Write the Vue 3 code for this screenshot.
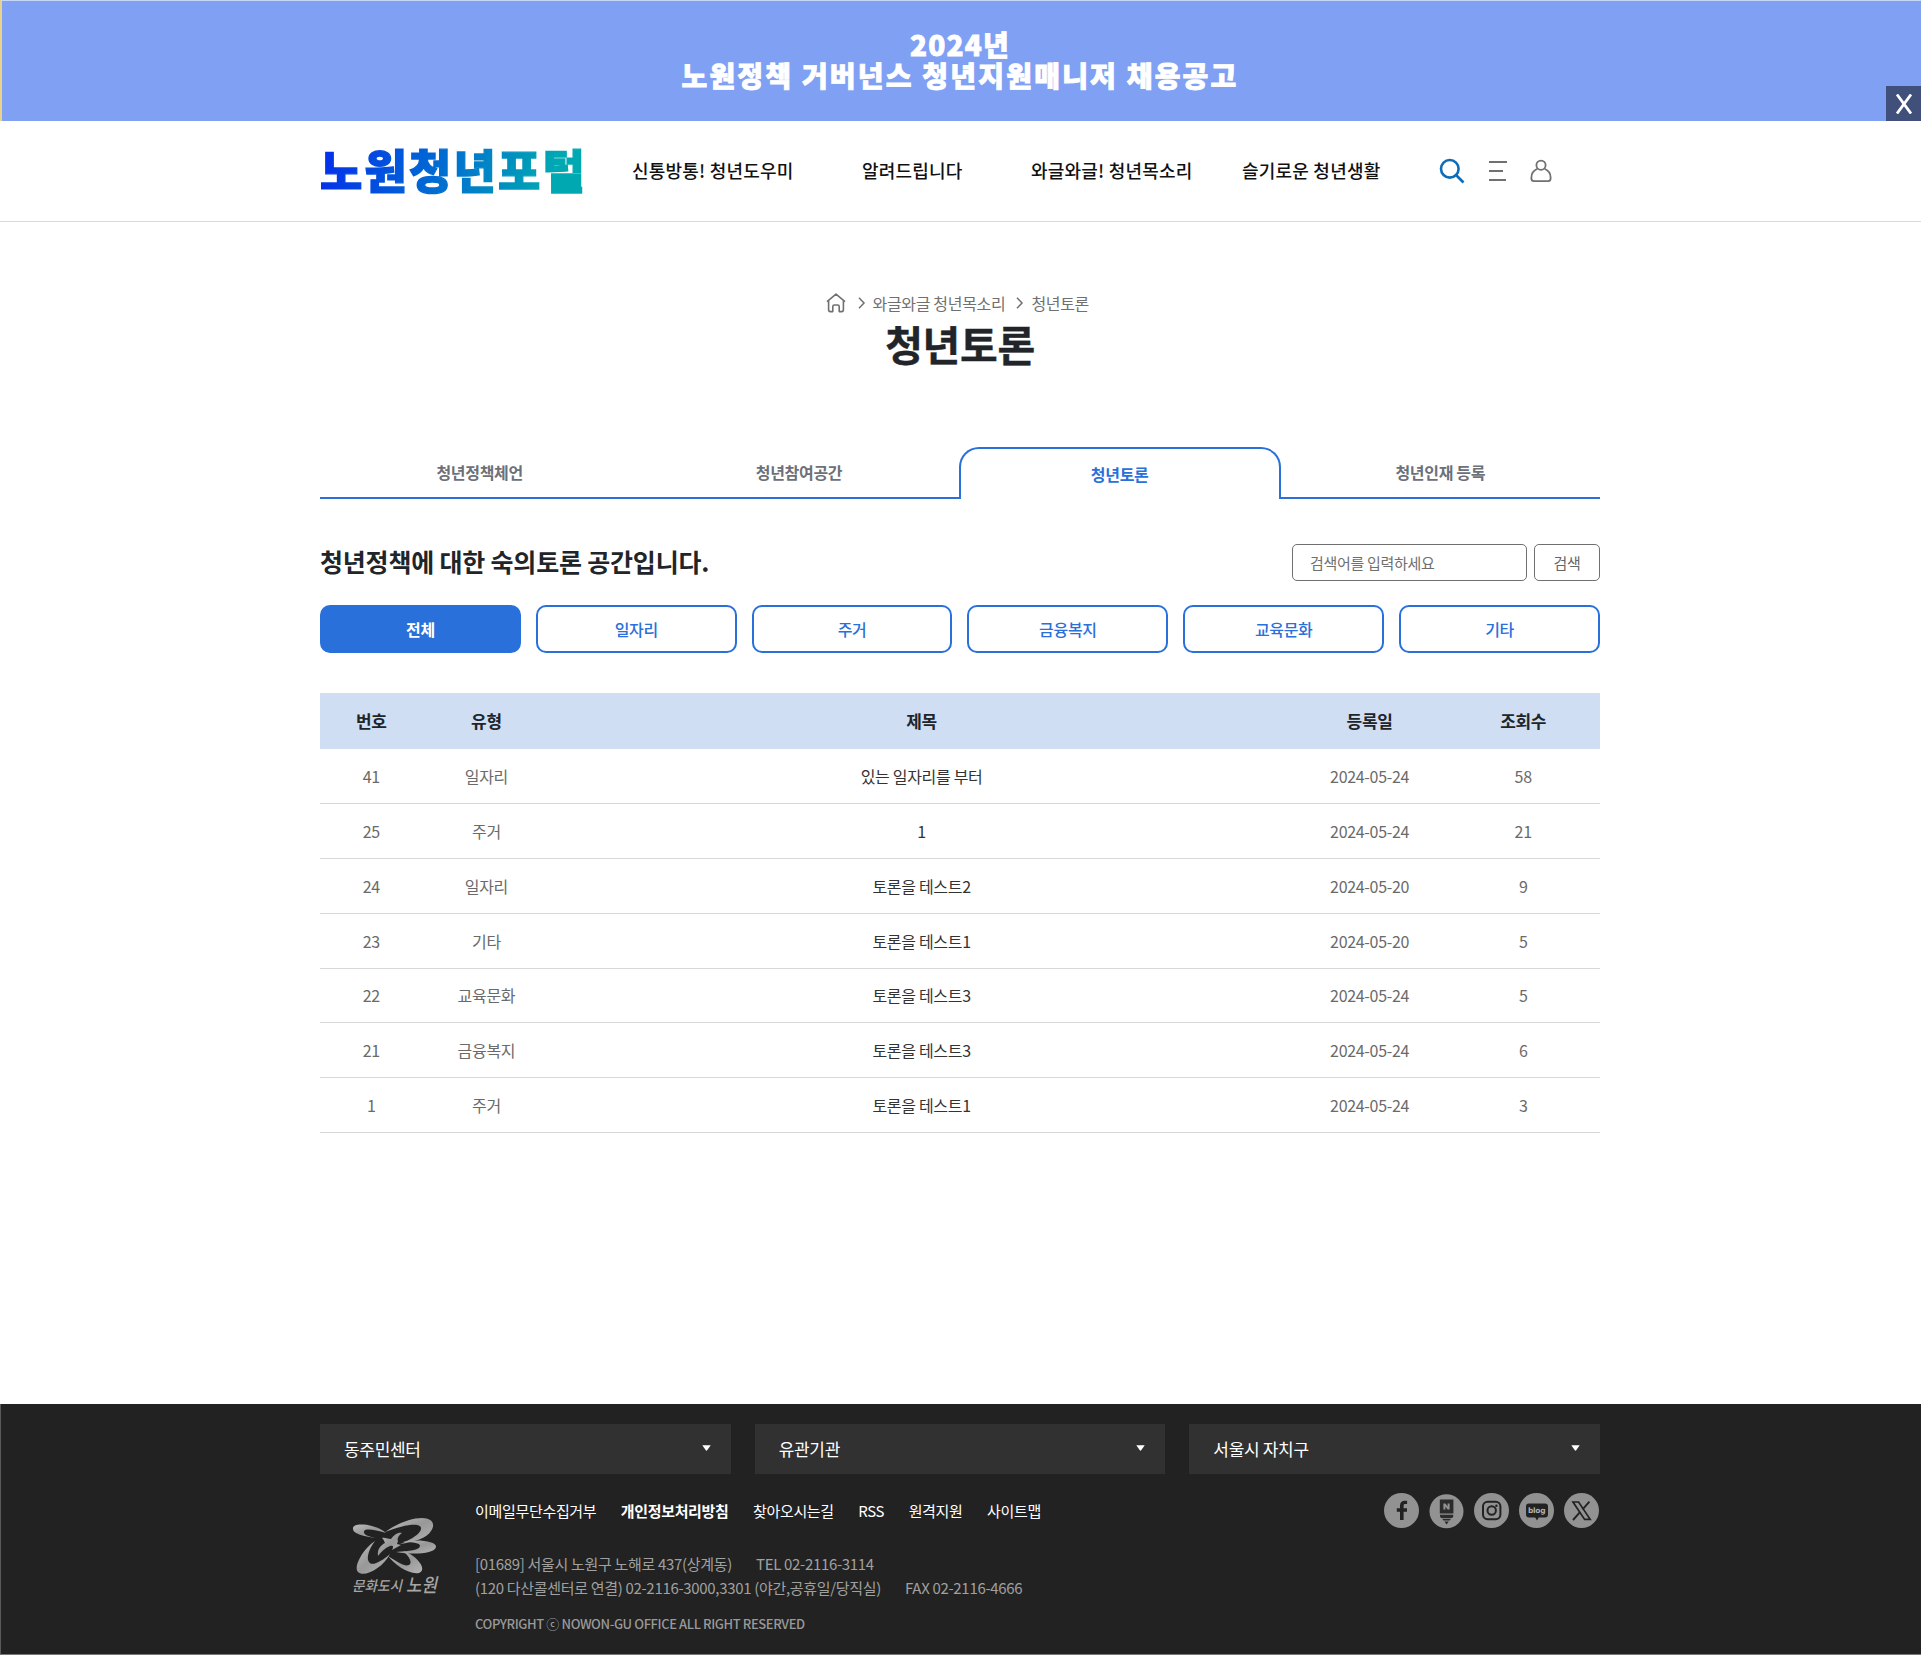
<script setup>
const nav = ['신통방통! 청년도우미', '알려드립니다', '와글와글! 청년목소리', '슬기로운 청년생활']
const tabs = ['청년정책체언', '청년참여공간', '청년토론', '청년인재 등록']
const categories = ['전체', '일자리', '주거', '금융복지', '교육문화', '기타']
const columns = ['번호', '유형', '제목', '등록일', '조회수']
const rows = [
  [41, '일자리', '있는 일자리를 부터', '2024-05-24', 58],
  [25, '주거', '1', '2024-05-24', 21],
  [24, '일자리', '토론을 테스트2', '2024-05-20', 9],
  [23, '기타', '토론을 테스트1', '2024-05-20', 5],
  [22, '교육문화', '토론을 테스트3', '2024-05-24', 5],
  [21, '금융복지', '토론을 테스트3', '2024-05-24', 6],
  [1, '주거', '토론을 테스트1', '2024-05-24', 3],
]
const sites = ['동주민센터', '유관기관', '서울시 자치구']
const links = ['이메일무단수집거부', '개인정보처리방침', '찾아오시는길', 'RSS', '원격지원', '사이트맵']
</script>

<template>
  <div class="page">
    <div class="banner">
      <p class="year">2024년</p>
      <p class="notice">노원정책 거버넌스 청년지원매니저 채용공고</p>
      <button class="close" aria-label="닫기">
        <svg width="18" height="20" viewBox="0 0 18 20"><path d="M2 0.5 16 19.5M16 0.5 2 19.5" stroke="#fff" stroke-width="2.8" /></svg>
      </button>
    </div>

    <header class="header">
      <div class="wrap header-in">
        <a class="logo">노원청년포털</a>
        <nav class="nav"><a v-for="n in nav" :key="n">{{ n }}</a></nav>
        <div class="tools">
          <svg class="i-search" width="26" height="26" viewBox="0 0 26 26" fill="none" stroke="#0d6db8" stroke-width="2.6"><circle cx="10.8" cy="10.8" r="8.8" /><path d="M17 17l7.5 7.5" /></svg>
          <svg class="i-menu" width="18" height="22" viewBox="0 0 18 22" stroke="#707070" stroke-width="2"><path d="M0 2h18M0 11h14M0 20h17" /></svg>
          <svg class="i-user" width="22" height="24" viewBox="0 0 22 24" fill="none" stroke="#707070" stroke-width="1.8"><circle cx="11" cy="6.2" r="4.6" /><path d="M7.4 9.8C3.6 11.5 1.4 14.6 1.4 18.4v1.2a2.6 2.6 0 0 0 2.6 2.6h14a2.6 2.6 0 0 0 2.6-2.6v-1.2c0-3.8-2.2-6.9-6-8.6" /></svg>
        </div>
      </div>
    </header>

    <main class="wrap main">
      <div class="crumbs">
        <svg width="20" height="20" viewBox="0 0 20 20" fill="none" stroke="#707070" stroke-width="1.6" stroke-linejoin="round"><path d="M1 8.6 10 1.2l9 7.4M2.6 7.6v9.2a1.8 1.8 0 0 0 1.8 1.8h2.4v-5a1.6 1.6 0 0 1 1.6-1.6h3.2a1.6 1.6 0 0 1 1.6 1.6v5h2.4a1.8 1.8 0 0 0 1.8-1.8V7.6" /></svg>
        <svg class="chev first" width="8" height="12" viewBox="0 0 8 12"><path d="M1 .8 6 6l-5 5.2" fill="none" stroke="#707070" stroke-width="1.5" /></svg>
        <span>와글와글 청년목소리</span>
        <svg class="chev" width="8" height="12" viewBox="0 0 8 12"><path d="M1 .8 6 6l-5 5.2" fill="none" stroke="#707070" stroke-width="1.5" /></svg>
        <span>청년토론</span>
      </div>
      <h1>청년토론</h1>

      <div class="tabs">
        <a v-for="(t, i) in tabs" :key="t" :class="{ on: i === 2 }">{{ t }}</a>
      </div>

      <div class="intro">
        <h2>청년정책에 대한 숙의토론 공간입니다.</h2>
        <div class="search">
          <input type="text" placeholder="검색어를 입력하세요" />
          <button>검색</button>
        </div>
      </div>

      <div class="cats">
        <a v-for="(c, i) in categories" :key="c" :class="{ on: i === 0 }">{{ c }}</a>
      </div>

      <div class="table">
        <div class="row head"><span v-for="c in columns" :key="c">{{ c }}</span></div>
        <div v-for="r in rows" :key="r[0]" class="row">
          <span v-for="(c, i) in r" :key="i">{{ c }}</span>
        </div>
      </div>
    </main>

    <footer class="footer">
      <div class="wrap">
        <div class="sites">
          <div v-for="s in sites" :key="s" class="site">
            <span>{{ s }}</span>
            <svg width="9" height="6" viewBox="0 0 9 6"><path d="M.3.3h8.4L5.2 5.2a.9.9 0 0 1-1.4 0z" fill="#fff" /></svg>
          </div>
        </div>
        <div class="foot">
          <div class="emblem">
            <svg width="90" height="80" viewBox="0 0 90 80">
              <defs>
                <linearGradient id="silver" x1="0" y1="0" x2="1" y2="1"><stop offset="0" stop-color="#bcbcbc" /><stop offset=".5" stop-color="#989898" /><stop offset="1" stop-color="#b4b4b4" /></linearGradient>
              </defs>
              <g fill="url(#silver)">
                <path d="M35 14C45 7 60 0 72 0c10 0 14 6 9 13C77 20 64 24 50 26c12-5 20-10 21-15C72 4 55 6 35 14z" />
                <path d="M25 20C14 18 2 16 3 10 4 4 26 6 36 15 24 11 13 10 14 14c0 3 4 4 11 6z" />
                <path d="M53 24c13-3 34-1 33 5-1 7-24 8-40 5 13-1 24-2 24-6 0-3-6-4-17-4z" />
                <path d="M25 23C14 30 3 48 8 54c6 6 25-4 32-18-8 7-18 13-21 8-3-4 0-13 6-21z" />
                <path d="M38 38c6 8 21 19 31 17 9-3-2-18-16-22 6 5 10 12 6 14-5 2-13-4-21-9z" />
                <path d="M32 20c3-1 6 1 9 1 3-4 7-7 11-6-4 3-5 6-4 8l-1 3 4 1-9 5c2-4 1-5-2-4-5 2-9 6-12 10-1-7 3-11 7-13-1-2-1-3-3-5z" />
              </g>
              <text class="brush" x="2" y="73" textLength="50" lengthAdjust="spacingAndGlyphs" font-size="14">문화도시</text>
              <text class="brush" x="56" y="74" textLength="31" lengthAdjust="spacingAndGlyphs" font-size="19">노원</text>
            </svg>
          </div>
          <div class="info">
            <div class="links"><a v-for="(l, i) in links" :key="l" :class="{ strong: i === 1 }">{{ l }}</a></div>
            <address>
              <p><span>[01689] 서울시 노원구 노해로 437(상계동)</span><span>TEL 02-2116-3114</span></p>
              <p><span>(120 다산콜센터로 연결) 02-2116-3000,3301 (야간,공휴일/당직실)</span><span>FAX 02-2116-4666</span></p>
            </address>
            <p class="copy">COPYRIGHT ⓒ NOWON-GU OFFICE ALL RIGHT RESERVED</p>
          </div>
          <div class="social">
            <svg viewBox="0 0 35 35"><circle cx="17.5" cy="17.5" r="17.5" fill="#929292" /><path d="M16 27V18.8h-3.2v-3.6H16v-2.7c0-3.3 1.9-4.8 4.7-4.8h2.4v3.4h-1.7c-1.4 0-1.8.6-1.8 1.8v2.3h3.4v3.6h-3.4V27z" fill="#222" /></svg>
            <svg viewBox="0 0 35 35"><circle cx="17.5" cy="18.2" r="17" fill="#929292" /><path d="M10.8 6.5h13.6v14H10.8zM11 21.8h13.2v1.6l-1 1.6H12l-1-1.6zM13.2 25.8h8.8l-1.3 1.8h-6.2zM15.4 28.4h4.4l-2.2 3.2z" fill="#2c2c2c" /><path d="M14.4 16.6v-6.2h2l2.2 3v-3h2v6.2h-2l-2.2-3v3z" fill="#929292" /></svg>
            <svg viewBox="0 0 35 35"><circle cx="17.5" cy="17.5" r="17.5" fill="#929292" /><g fill="none" stroke="#222" stroke-width="2"><rect x="9" y="8.8" width="17.4" height="17.4" rx="4.6" /><circle cx="17.7" cy="17.5" r="4.2" /></g><circle cx="22.4" cy="12.8" r="1.2" fill="#222" /></svg>
            <svg viewBox="0 0 35 35"><circle cx="17.5" cy="17.5" r="17.5" fill="#929292" /><path d="M10 10.5h16a3 3 0 0 1 3 3v8a3 3 0 0 1-3 3h-6.2l-1.8 3-1.8-3H10a3 3 0 0 1-3-3v-8a3 3 0 0 1 3-3z" fill="#222" /><text x="9" y="20" class="blog" textLength="17.6">blog</text></svg>
            <svg viewBox="0 0 35 35"><circle cx="17.5" cy="17.5" r="17.5" fill="#929292" /><path d="M9 9h5.6l11.6 17.4h-5.6z" fill="none" stroke="#222" stroke-width="1.7" /><path d="M25.4 8.6 18.6 16.4M16 19.2 9 27" stroke="#222" stroke-width="1.9" /></svg>
          </div>
        </div>
      </div>
    </footer>
  </div>
</template>

<style>
body { margin: 0; background: #fff; }
</style>

<style scoped>
* { box-sizing: border-box; }
p, h1, h2 { margin: 0; }
.page { height: 1656px; overflow: hidden; font-family: "Noto Sans CJK KR", "Noto Sans", sans-serif; font-size: 16px; letter-spacing: -0.02em; color: #212529; }
.wrap { width: 1280px; margin-left: 320px; }

.banner { position: relative; height: 121px; padding: 28px 3px 0 0; background: #80a0f3; border-top: 1px solid #c5d6f6; border-left: 2px solid #e8d28c; color: #fff; text-align: center; font-weight: 900; font-size: 28px; line-height: 31px; -webkit-text-stroke: 0.8px #fff; }
.year { letter-spacing: 1.2px; }
.notice { letter-spacing: 2.2px; }
.close { position: absolute; right: 0; bottom: 0; width: 35px; height: 35px; padding: 0; border: 0; background: #40507a; display: flex; align-items: center; justify-content: center; }

.header { height: 101px; border-bottom: 1px solid #d9d9d9; }
.header-in { height: 100px; display: flex; align-items: center; }
.logo { width: 293px; margin-top: -6px; font-size: 46px; line-height: 60px; font-weight: 900; letter-spacing: 2.2px; -webkit-text-stroke: 1.3px transparent; }
.logo { background: linear-gradient(105deg, #0433ea 5%, #0068d4 42%, #00a9b2 86%) 0 0 / 268px 100% no-repeat; -webkit-background-clip: text; background-clip: text; color: transparent; }
.nav { display: flex; margin-top: -3px; }
.nav a { width: 199.5px; text-align: center; font-size: 18px; font-weight: 500; color: #111; letter-spacing: 0.2px; white-space: nowrap; }
.tools { display: flex; align-items: center; margin-left: 28px; }
.i-menu { margin-left: 24px; }
.i-user { margin-left: 23px; }

.main { height: 1182px; padding-top: 69px; }
.crumbs { height: 24px; display: flex; align-items: center; padding-left: 505.5px; color: #707070; line-height: 24px; }
.chev { margin: 0 7px 0 11px; }
.chev.first { margin: 0 7px 0 12px; }
h1 { height: 60px; margin-top: -2px; line-height: 60px; text-align: center; font-size: 41px; font-weight: 700; -webkit-text-stroke: 0.4px #212529; }

.tabs { display: flex; align-items: flex-end; margin-top: 74px; }
.tabs a { flex: 1; height: 50px; line-height: 47px; text-align: center; font-weight: 700; color: #6c7079; border-bottom: 2px solid #2970db; }
.tabs a.on { flex: 0 0 322px; height: 52px; line-height: 51px; color: #2970db; border: 2px solid #2970db; border-bottom: 0; border-radius: 20px 20px 0 0; }

.intro { display: flex; justify-content: space-between; align-items: center; height: 38px; margin-top: 44px; }
h2 { font-size: 25px; font-weight: 700; letter-spacing: -0.2px; line-height: 36px; height: 38px; }
.search { display: flex; gap: 7px; }
.search input { width: 235px; height: 37px; padding: 0 17px; border: 1px solid #707070; border-radius: 5px; font: inherit; font-size: 15px; letter-spacing: -0.02em; outline: 0; }
.search input::placeholder { color: #707070; opacity: 1; }
.search button { width: 66px; height: 37px; padding: 0; border: 1px solid #707070; border-radius: 5px; background: #fff; font: inherit; font-size: 15px; letter-spacing: -0.02em; color: #666; }

.cats { display: flex; gap: 15px; margin-top: 24px; }
.cats a { flex: 1; height: 48px; line-height: 45px; text-align: center; border: 2px solid #2970db; border-radius: 10px; color: #2970db; font-weight: 500; }
.cats a.on { background: #2970db; color: #fff; font-weight: 700; }

.table { margin-top: 40.4px; }
.row { display: grid; grid-template-columns: 8% 10% 58% 12% 12%; height: 54.8px; align-items: center; text-align: center; color: #6a6a6a; border-bottom: 1px solid #d8d8d8; }
.row span:nth-child(3) { color: #333; }
.row.head { height: 56px; padding-bottom: 2px; background: #d0def4; border: 0; font-size: 17px; font-weight: 700; color: #212529; }
.row.head span:nth-child(3) { color: #212529; }

.footer { height: 251px; background: #222; border-left: 1px solid #5a5a5a; border-bottom: 1px solid #777; padding-top: 20px; }
.footer .wrap { margin-left: 319px; }
.sites { display: flex; gap: 24px; }
.site { flex: 1; height: 50px; display: flex; align-items: center; justify-content: space-between; padding: 0 20px 2px 24px; background: #313131; color: #fff; font-size: 17px; }
.foot { display: flex; }
.emblem { width: 155px; padding: 44px 0 0 30px; }
.brush { fill: #a6a6a6; font-weight: 500; font-style: italic; letter-spacing: 0; }
.info { flex: 1; }
.links { display: flex; gap: 24.4px; margin-top: 25px; height: 24px; line-height: 24px; font-size: 15px; color: #fff; }
.strong { font-weight: 700; }
address { margin-top: 29px; font-style: normal; font-size: 15px; line-height: 24px; color: #a0a0a0; }
address span { margin-right: 24px; }
.copy { margin-top: 12px; font-size: 13px; line-height: 24px; font-weight: 500; letter-spacing: -0.4px; color: #999; }
.social { display: flex; gap: 10px; margin: 19px 1px 0 0; }
.social svg { width: 35px; height: 35px; overflow: visible; }
.blog { font-family: "DejaVu Sans", sans-serif; font-size: 7.5px; font-weight: 700; fill: #b0b0b0; letter-spacing: 0; }
</style>
